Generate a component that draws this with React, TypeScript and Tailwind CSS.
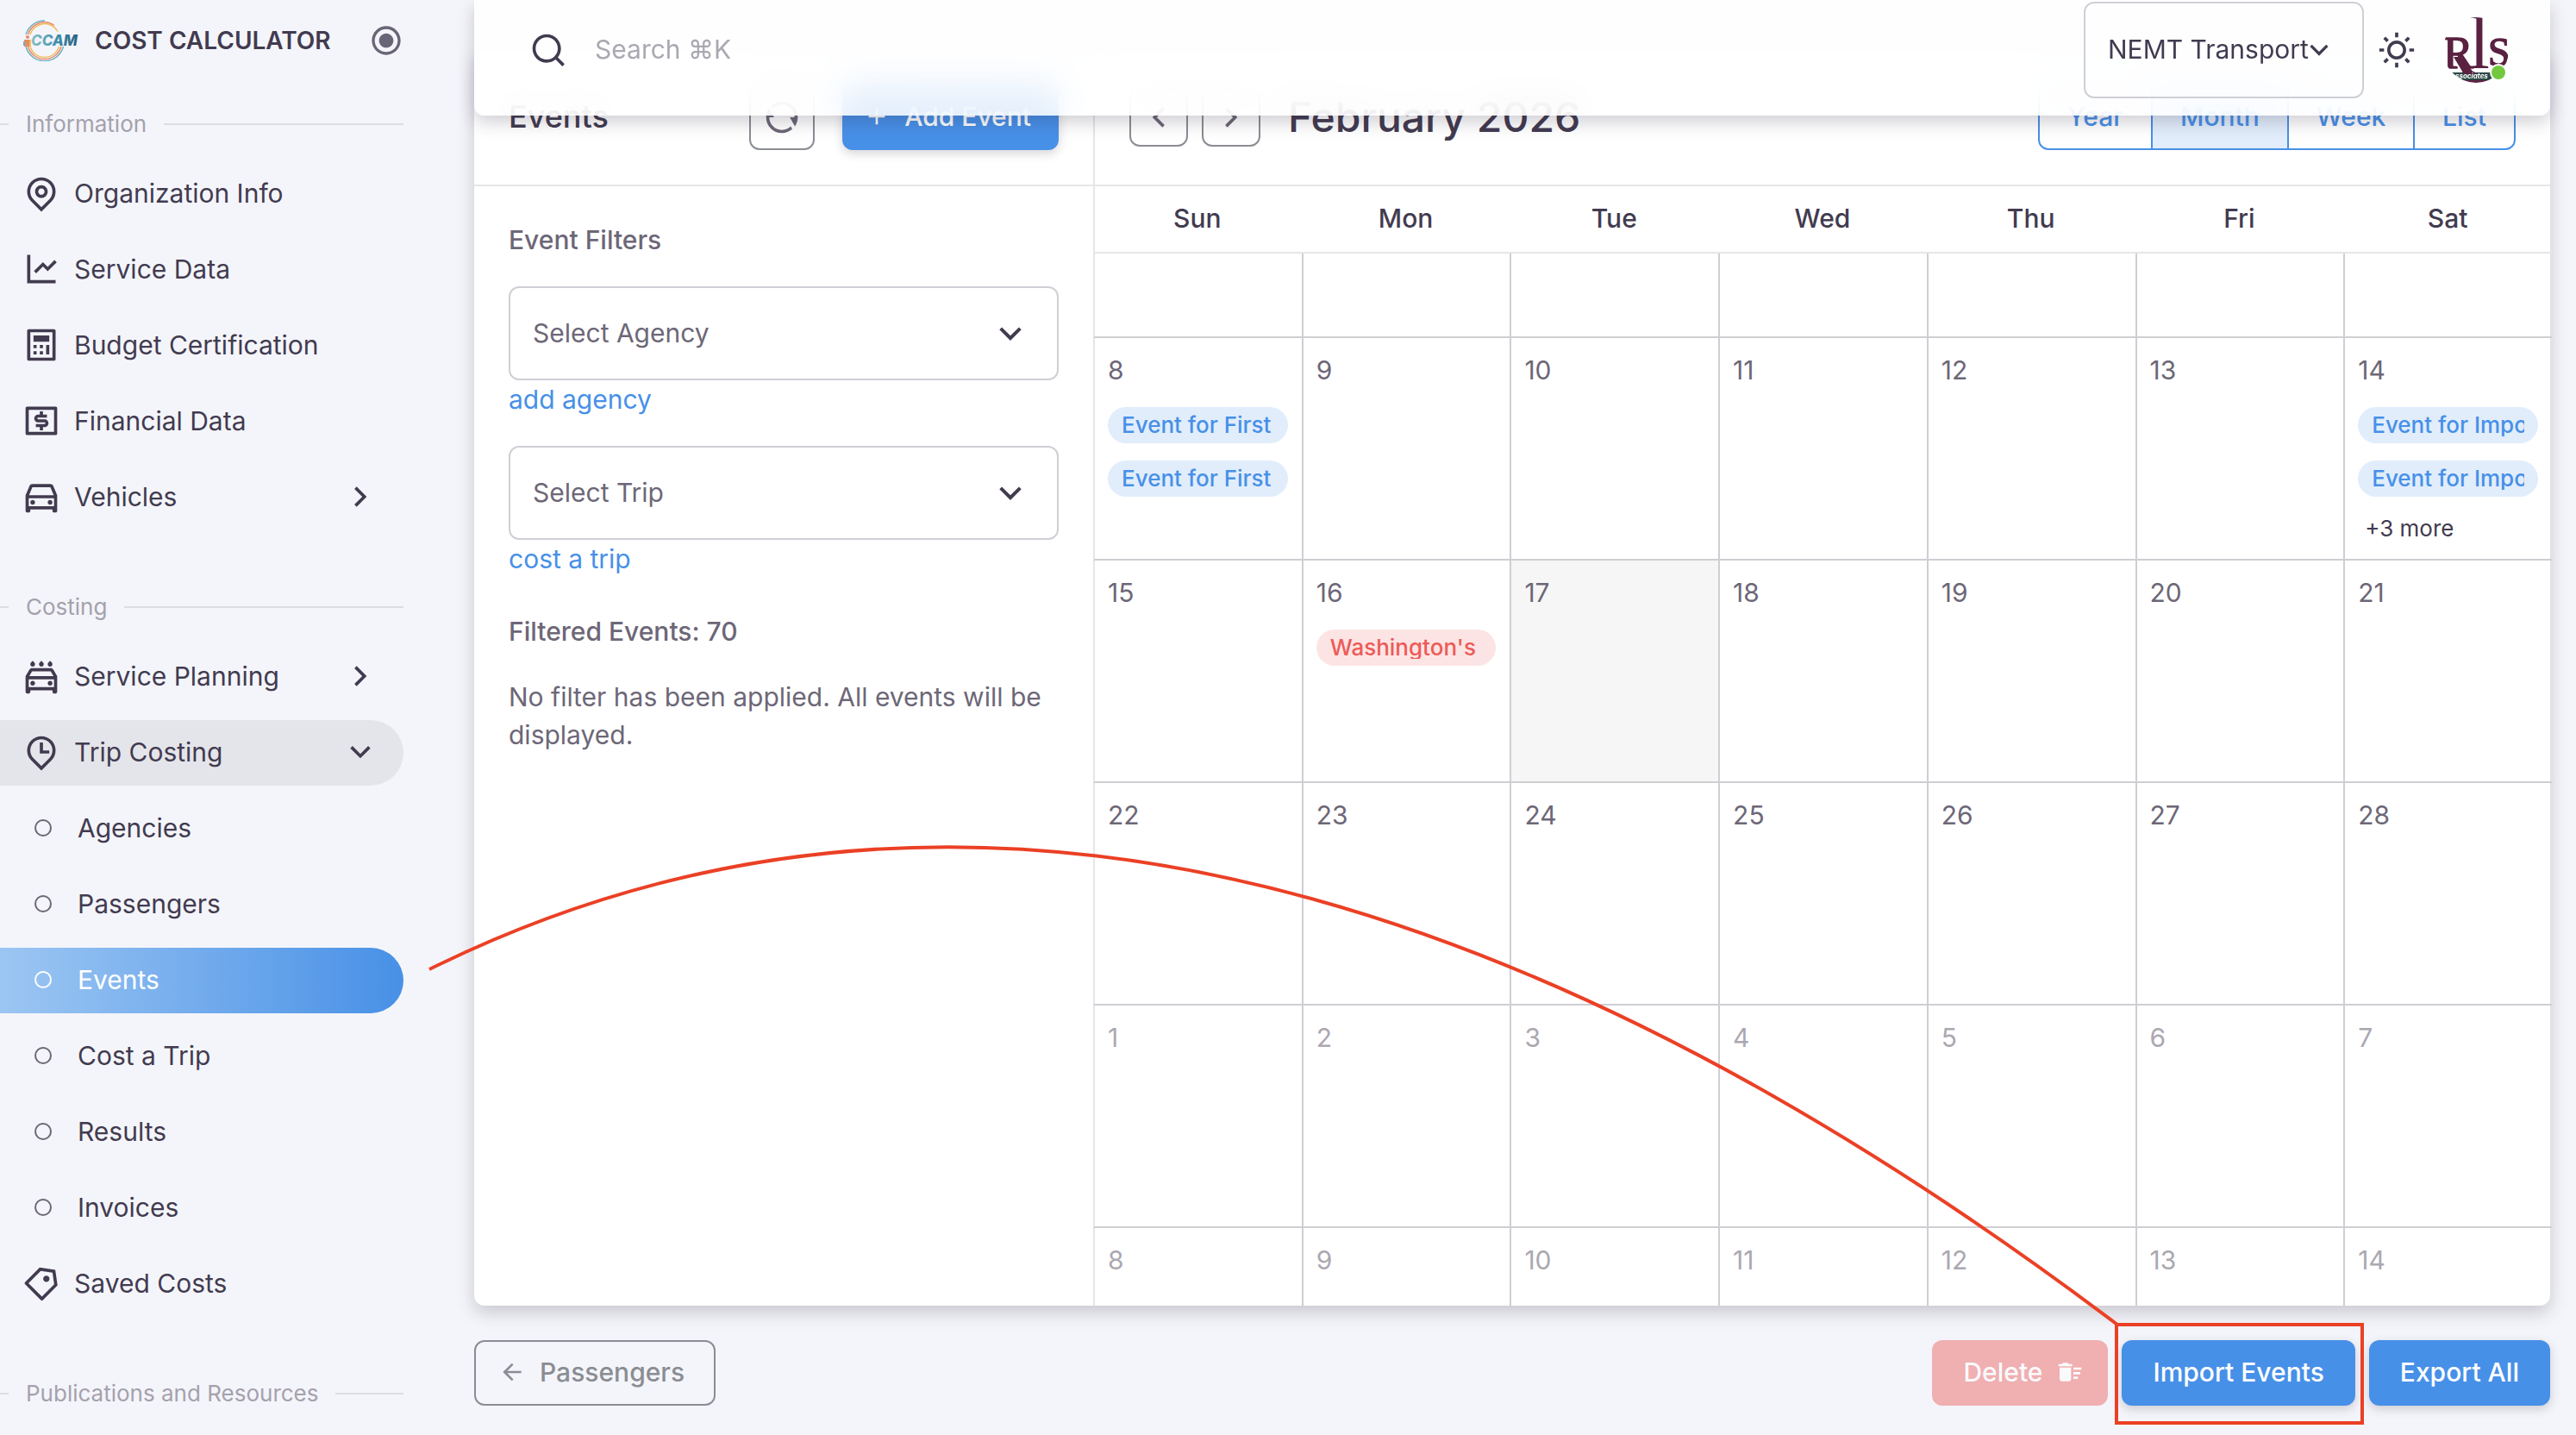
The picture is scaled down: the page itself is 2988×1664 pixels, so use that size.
import type { ReactNode } from "react";
import type { IconType } from "react-icons";
import {
  RiAddLine,
  RiArrowDownSLine,
  RiArrowLeftLine,
  RiArrowLeftSLine,
  RiArrowRightSLine,
  RiCalculatorLine,
  RiCarLine,
  RiCarWashingLine,
  RiLineChartLine,
  RiMapPinLine,
  RiMapPinTimeLine,
  RiMoneyDollarBoxLine,
  RiPriceTag3Line,
  RiRefreshLine,
  RiSearchLine,
  RiSunLine,
} from "react-icons/ri";
import { MdDeleteSweep, MdRadioButtonChecked } from "react-icons/md";

interface NavEntry {
  label: string;
  icon?: IconType;
  state?: "open" | "closed";
  active?: boolean;
}

interface CalendarDay {
  day: number;
  outside?: boolean;
  today?: boolean;
  events?: { title: string; color: "blue" | "red" }[];
  more?: number;
}

const informationNav: NavEntry[] = [
  { label: "Organization Info", icon: RiMapPinLine },
  { label: "Service Data", icon: RiLineChartLine },
  { label: "Budget Certification", icon: RiCalculatorLine },
  { label: "Financial Data", icon: RiMoneyDollarBoxLine },
  { label: "Vehicles", icon: RiCarLine, state: "closed" },
];

const costingNav: NavEntry[] = [
  { label: "Service Planning", icon: RiCarWashingLine, state: "closed" },
  { label: "Trip Costing", icon: RiMapPinTimeLine, state: "open" },
  { label: "Agencies" },
  { label: "Passengers" },
  { label: "Events", active: true },
  { label: "Cost a Trip" },
  { label: "Results" },
  { label: "Invoices" },
  { label: "Saved Costs", icon: RiPriceTag3Line },
];

const weekdays = ["Sun", "Mon", "Tue", "Wed", "Thu", "Fri", "Sat"];

const firstEvent = { title: "Event for First", color: "blue" as const };
const importEvent = { title: "Event for Import", color: "blue" as const };

const weeks: CalendarDay[][] = [
  [
    { day: 8, events: [firstEvent, firstEvent] },
    { day: 9 },
    { day: 10 },
    { day: 11 },
    { day: 12 },
    { day: 13 },
    { day: 14, events: [importEvent, importEvent], more: 3 },
  ],
  [
    { day: 15 },
    { day: 16, events: [{ title: "Washington's", color: "red" }] },
    { day: 17, today: true },
    { day: 18 },
    { day: 19 },
    { day: 20 },
    { day: 21 },
  ],
  [22, 23, 24, 25, 26, 27, 28].map((day) => ({ day })),
  [1, 2, 3, 4, 5, 6, 7].map((day) => ({ day, outside: true })),
];

const lastWeek: CalendarDay[] = [8, 9, 10, 11, 12, 13, 14].map((day) => ({ day, outside: true }));

function CcamLogo() {
  return (
    <svg width="68" height="48" viewBox="0 0 68 48" aria-label="CCAM" className="shrink-0">
      <defs>
        <linearGradient id="ccam" x1="0" x2="1">
          <stop offset="0" stopColor="#8cc0c6" />
          <stop offset="0.5" stopColor="#3f93b0" />
          <stop offset="1" stopColor="#2c5f80" />
        </linearGradient>
      </defs>
      <g fill="none" strokeWidth="1.5">
        <path d="M4 17A22.500 22.500 0 0 1 26 1" stroke="#6fb1c9" />
        <path d="M6.500 17A20 20 0 0 1 37 6.500" stroke="#e98a61" />
        <path d="M9 17A17.500 17.500 0 0 1 41 13.500" stroke="#f0bd62" />
        <path d="M4 31A22.500 22.500 0 0 0 47.500 31" stroke="#6fb1c9" />
        <path d="M6.500 31A20 20 0 0 0 45 31" stroke="#e98a61" />
        <path d="M9 31A17.500 17.500 0 0 0 42.500 31" stroke="#f0bd62" />
      </g>
      <circle cx="6" cy="20" r="2" fill="#e98a61" />
      <path d="M2 23h8v8H2z" fill="#e98a61" />
      <path d="M1 25h2v5H1z" fill="#6fb1c9" />
      <path d="M8 23h2v8H8z" fill="#f0bd62" />
      <text
        x="10"
        y="30"
        fontFamily="Inter, sans-serif"
        fontSize="17"
        fontWeight="800"
        fontStyle="italic"
        fill="url(#ccam)"
      >
        CCAM
      </text>
    </svg>
  );
}

function RlsLogo() {
  return (
    <svg width="76" height="76" viewBox="0 0 76 76" aria-label="RLS &amp; Associates">
      <defs>
        <clipPath id="avatar">
          <circle cx="38" cy="38" r="38" />
        </clipPath>
      </defs>
      <g clipPath="url(#avatar)">
        <path d="M12 46h8L37 66H24z" fill="#5a2140" />
        <path d="M6 64h54v9H6z" fill="#2c4644" />
        <path d="M6 73h54v5H6z" fill="#5a2140" />
        <path d="M22 63h14l2 3H24z" fill="#5a2140" />
        <g fill="#5a2140" stroke="#5a2140" fontFamily="Liberation Serif, serif">
          <text x="0" y="59" fontSize="52" strokeWidth="1.5">
            R
          </text>
          <text x="30" y="59" fontSize="86" strokeWidth="0">
            l
          </text>
          <text x="52" y="56" fontSize="46" strokeWidth="1.5">
            S
          </text>
        </g>
        <text
          x="14"
          y="71"
          fontFamily="Inter, sans-serif"
          fontSize="8"
          fontWeight="700"
          fontStyle="italic"
          fill="#fff"
        >
          ssociates
        </text>
      </g>
    </svg>
  );
}

function NavHeading({ title }: { title: string }) {
  return (
    <h2 className="flex h-[62px] items-center gap-5 text-[26px] text-[#a5a1ad]">
      <span className="h-[2px] w-[10px] bg-[#dcdce2]" />
      {title}
      <span className="h-[2px] flex-1 bg-[#dcdce2]" />
    </h2>
  );
}

function NavSection({ title, children }: { title: string; children: ReactNode }) {
  return (
    <section className="mb-[58px]">
      <NavHeading title={title} />
      <ul>{children}</ul>
    </section>
  );
}

function NavItem({ label, icon: Icon, state, active }: NavEntry) {
  const tone = active
    ? "bg-linear-to-r from-[#9cc6f2] to-[#4790e6] text-white"
    : state === "open"
      ? "bg-[#e4e5ea]"
      : "";
  return (
    <li className="mt-3">
      <a
        href="#"
        className={`flex h-[76px] items-center rounded-r-full pr-7 pb-[2px] text-[30px] ${tone} ${Icon ? "pl-[26px]" : "pl-10"}`}
      >
        {Icon ? (
          <Icon className="mr-4 size-11 shrink-0" />
        ) : (
          <span
            className={`mr-[30px] size-5 shrink-0 rounded-full border-2 ${active ? "border-white" : "border-[#6d6777]"}`}
          />
        )}
        <span className="flex-1">{label}</span>
        {state === "closed" && <RiArrowRightSLine className="size-11" />}
        {state === "open" && <RiArrowDownSLine className="size-11" />}
      </a>
    </li>
  );
}

function FilterSelect({ id, placeholder, link }: { id: string; placeholder: string; link: string }) {
  return (
    <div className="mt-8">
      <div className="grid items-center">
        <select
          id={id}
          aria-label={placeholder}
          className="col-start-1 row-start-1 h-[109px] w-full appearance-none rounded-xl border-2 border-[#d0cfd6] bg-white px-[26px] pb-[2px] text-[30px] text-[#6d6777]"
        >
          <option>{placeholder}</option>
        </select>
        <RiArrowDownSLine className="pointer-events-none col-start-1 row-start-1 mr-8 size-12 justify-self-end" />
      </div>
      <a href="#" className="block text-[#4790e8]">
        {link}
      </a>
    </div>
  );
}

function DayCell({ day, outside, today, events = [], more }: CalendarDay) {
  return (
    <td
      className={`border-l-2 border-[#cfced3] pt-[15px] pr-4 pl-[15px] align-top leading-[44px] first:border-l-transparent ${today ? "bg-[#f6f6f7]" : ""} ${outside ? "text-[#aba8b1]" : "text-[#6d6777]"}`}
    >
      {day}
      {events.length > 0 && (
        <div className="mt-[21px] flex flex-col gap-5">
          {events.map((event, i) => (
            <a
              key={i}
              href="#"
              className={`block rounded-full px-4 py-2 text-[26px] leading-[26px] font-medium ${event.color === "red" ? "bg-[#fde4e4] text-[#ec5b58]" : "bg-[#e1edfb] text-[#4790e8]"}`}
            >
              <span className="block overflow-hidden whitespace-nowrap">{event.title}</span>
            </a>
          ))}
        </div>
      )}
      {more && (
        <a href="#" className="mt-[18px] block pl-2 text-[26px] leading-[38px] text-[#423b50]">
          +{more} more
        </a>
      )}
    </td>
  );
}

export default function App() {
  return (
    <div className="relative flex min-h-screen bg-[#f4f5fa] font-['Inter','Noto_Sans',sans-serif] text-[30px] leading-[44px] text-[#423b50]">
      <aside className="w-[468px] shrink-0">
        <div className="mb-[19px] flex h-[94px] items-center pl-[26px]">
          <CcamLogo />
          <h1 className="ml-4 flex-1 text-[28px] font-semibold whitespace-nowrap">COST CALCULATOR</h1>
          <button aria-label="Collapse menu" className="text-[#6a6576]">
            <MdRadioButtonChecked className="size-10" />
          </button>
        </div>
        <nav>
          <NavSection title="Information">
            {informationNav.map((item) => (
              <NavItem key={item.label} {...item} />
            ))}
          </NavSection>
          <NavSection title="Costing">
            {costingNav.map((item) => (
              <NavItem key={item.label} {...item} />
            ))}
          </NavSection>
          <NavHeading title="Publications and Resources" />
        </nav>
      </aside>

      <main className="min-w-0 flex-1 pr-[30px] pl-[82px]">
        <header className="sticky top-0 z-10 rounded-b-xl bg-white/85 pb-[18px] shadow-[0_8px_20px_rgba(46,38,61,0.22)] backdrop-blur-[20px]">
          <div className="flex h-[116px] items-center pr-12 pl-16">
            <RiSearchLine className="size-11" />
            <input
              type="text"
              aria-label="Search"
              placeholder="Search ⌘K"
              className="ml-8 min-w-0 flex-1 bg-transparent pb-[2px] placeholder:text-[#aba8b1] outline-none"
            />
            <div className="grid w-[325px] items-center">
              <select
                aria-label="Organization"
                className="col-start-1 row-start-1 h-28 w-full appearance-none rounded-xl border-2 border-[#d0cfd6] bg-transparent pb-[2px] pl-[26px]"
              >
                <option>NEMT Transport</option>
              </select>
              <RiArrowDownSLine className="pointer-events-none col-start-1 row-start-1 mr-8 size-10 justify-self-end" />
            </div>
            <button aria-label="Toggle theme" className="ml-4">
              <RiSunLine className="size-11" />
            </button>
            <button aria-label="Account" className="relative ml-8">
              <RlsLogo />
              <span className="absolute right-0.5 bottom-0.5 size-5 rounded-full border-2 border-white bg-[#72c93e]" />
            </button>
          </div>
        </header>

        <div className="-mt-[76px] flex rounded-xl bg-white shadow-[0_8px_20px_rgba(46,38,61,0.22)]">
          <section className="w-[720px] shrink-0 border-r-2 border-[#e6e5e8]">
            <div className="flex h-[158px] items-center border-b-2 border-[#e6e5e8] px-10">
              <h2 className="flex-1 pb-[2px] text-[36px] font-medium">Events</h2>
              <button
                aria-label="Refresh"
                className="flex size-[76px] items-center justify-center rounded-xl border-2 border-[#8a8d93] text-[#6d6777]"
              >
                <RiRefreshLine className="size-11" />
              </button>
              <button className="ml-8 flex h-[76px] items-center gap-4 rounded-xl bg-[#4790e8] pr-8 pl-6 pb-[2px] font-medium text-white shadow-[0_4px_12px_rgba(46,38,61,0.2)]">
                <RiAddLine className="size-8" />
                Add Event
              </button>
            </div>
            <div className="p-10">
              <h3 className="font-medium text-[#6d6777]">Event Filters</h3>
              <FilterSelect id="agency" placeholder="Select Agency" link="add agency" />
              <FilterSelect id="trip" placeholder="Select Trip" link="cost a trip" />
              <h3 className="mt-10 font-medium text-[#6d6777]">Filtered Events: 70</h3>
              <p className="mt-8 text-[#6d6777]">No filter has been applied. All events will be displayed.</p>
            </div>
          </section>

          <section className="min-w-0 flex-1">
            <div className="flex h-[158px] items-center border-b-2 border-[#e6e5e8] px-10">
              <button
                aria-label="Previous month"
                className="flex size-[68px] items-center justify-center rounded-xl border-2 border-[#8a8d93] text-[#6d6777]"
              >
                <RiArrowLeftSLine className="size-11" />
              </button>
              <button
                aria-label="Next month"
                className="ml-4 flex size-[68px] items-center justify-center rounded-xl border-2 border-[#8a8d93] text-[#6d6777]"
              >
                <RiArrowRightSLine className="size-11" />
              </button>
              <h2 className="ml-8 flex-1 text-[48px] font-medium">February 2026</h2>
              <div className="flex h-[76px] divide-x-2 divide-[#4790e8] overflow-hidden rounded-xl border-2 border-[#4790e8] font-medium text-[#4790e8] *:pb-[2px]">
                <button className="w-[131px]">Year</button>
                <button className="w-[158px] bg-[#e1edfb]">Month</button>
                <button className="w-[146px]">Week</button>
                <button className="w-[115px]">List</button>
              </div>
            </div>
            {/* one border wider on each side so the first column shares the panel divider */}
            <table className="-ml-[2px] w-[calc(100%+4px)] table-fixed border-separate border-spacing-0">
              <thead>
                <tr className="h-[78px]">
                  {weekdays.map((name) => (
                    <th key={name} className="border-b-2 border-[#e6e5e8] pb-[2px] font-medium">
                      {name}
                    </th>
                  ))}
                </tr>
              </thead>
              <tbody>
                <tr className="h-[98px] *:border-b-2">
                  {weekdays.map((name) => (
                    <td key={name} className="border-l-2 border-[#cfced3] first:border-l-transparent" />
                  ))}
                </tr>
                {weeks.map((week, i) => (
                  <tr key={i} className="h-[258px] *:border-b-2">
                    {week.map((cell) => (
                      <DayCell key={cell.day} {...cell} />
                    ))}
                  </tr>
                ))}
                <tr className="h-[90px]">
                  {lastWeek.map((cell) => (
                    <DayCell key={cell.day} {...cell} />
                  ))}
                </tr>
              </tbody>
            </table>
          </section>
        </div>

        <div className="mt-10 flex items-center gap-4 font-medium">
          <button className="mr-auto flex h-[76px] items-center gap-4 rounded-xl border-2 border-[#8a8d93] pr-[34px] pb-[2px] pl-[26px] text-[#8a8d93]">
            <RiArrowLeftLine className="size-8" />
            Passengers
          </button>
          <button
            disabled
            className="flex h-[76px] items-center gap-4 rounded-xl bg-[#f0afb1] pr-7 pb-[2px] pl-9 text-[#fafafc]"
          >
            Delete
            <MdDeleteSweep className="size-8" />
          </button>
          <button className="h-[76px] rounded-xl bg-[#4790e8] px-9 pb-[2px] text-white shadow-[0_4px_12px_rgba(46,38,61,0.2)]">
            Import Events
          </button>
          <button className="h-[76px] rounded-xl bg-[#4790e8] px-9 pb-[2px] text-white shadow-[0_4px_12px_rgba(46,38,61,0.2)]">
            Export All
          </button>
        </div>
      </main>

      {/* callout linking the Events menu item to the import button */}
      <svg
        viewBox="0 0 2988 1664"
        className="pointer-events-none absolute inset-x-0 top-0 z-20 w-full"
        fill="none"
        stroke="#eb4025"
        strokeWidth="4"
      >
        <path d="M498 1124Q1351 702 2456 1536" />
        <path d="M2455 1536h285v114h-285z" />
      </svg>
    </div>
  );
}
